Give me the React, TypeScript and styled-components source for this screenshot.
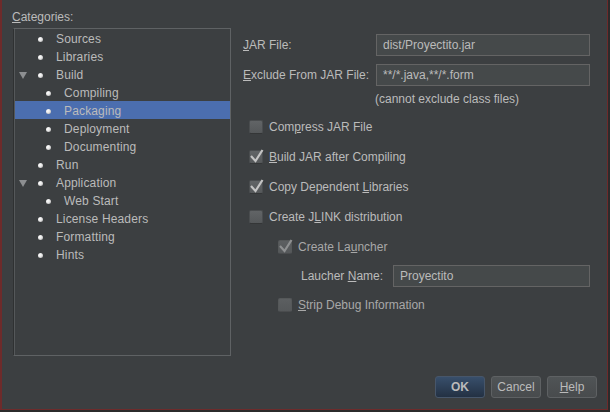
import React from "react";
import styled, { createGlobalStyle } from "styled-components";

const GlobalStyle = createGlobalStyle`
  html, body { margin: 0; padding: 0; background: #2b2b2b; }
  body {
    font-family: "Liberation Sans", Arial, sans-serif;
    font-size: 12px;
    color: #bbbbbb;
  }
`;

const Window = styled.div`
  width: 608px;
  height: 410px;
  box-sizing: border-box;
  background: #3c3f41;
  border-left: 2px solid #6e2b2b;
  border-right: 1px solid #6e2b2b;
  border-bottom: 1px solid #6e2b2b;
  padding: 8px 10px 11px 10px;
  display: flex;
  flex-direction: column;
`;

const Body = styled.div`
  display: flex;
  gap: 12px;
`;

const LeftColumn = styled.div`
  width: 219px;
  display: flex;
  flex-direction: column;
`;

const SectionLabel = styled.div`
  height: 20px;
  line-height: 19px;
`;

const Mn = styled.span`
  text-decoration: underline;
  text-underline-offset: 1px;
`;

const TreeBox = styled.div`
  margin-left: 1px;
  width: 218px;
  height: 328px;
  box-sizing: border-box;
  border: 1px solid #5f6264;
  border-left-color: #2f3132;
  box-shadow: inset 1px 0 0 #55585a;
  display: flex;
  flex-direction: column;
`;

const TreeRow = styled.div<{ $selected?: boolean }>`
  height: 18px;
  box-sizing: border-box;
  padding-top: 2px;
  line-height: 18px;
  display: flex;
  align-items: center;
  background: ${(p) => (p.$selected ? "#4b6eaf" : "transparent")};
  margin-left: ${(p) => (p.$selected ? "1px" : "0")};
  letter-spacing: 0.15px;
`;

const Twisty = styled.div<{ $selected?: boolean }>`
  width: ${(p) => (p.$selected ? "17px" : "18px")};
  display: flex;
  justify-content: center;
  align-items: center;
`;

const Triangle = styled.div`
  width: 0;
  height: 0;
  border-left: 4px solid transparent;
  border-right: 4px solid transparent;
  border-top: 7px solid #8d8f91;
`;

const Bullet = styled.div<{ $depth: number }>`
  width: 5px;
  height: 5px;
  border-radius: 50%;
  margin-left: ${(p) => (p.$depth === 1 ? 6 : 14)}px;
  margin-right: 13px;
  background: radial-gradient(circle at 35% 35%, #ffffff 0%, #e6e6e6 45%, #9a9a9a 100%);
`;

const RightColumn = styled.div`
  flex: 1;
  padding-top: 26px;
  padding-right: 7px;
  display: flex;
  flex-direction: column;
`;

const FieldRow = styled.div<{ $indent?: number; $gapTop?: number; $height?: number }>`
  display: flex;
  align-items: center;
  height: ${(p) => p.$height ?? 22}px;
  margin-top: ${(p) => p.$gapTop ?? 0}px;
  padding-left: ${(p) => p.$indent ?? 0}px;
`;

const FieldLabel = styled.div<{ $width: number }>`
  width: ${(p) => p.$width}px;
  flex-shrink: 0;
  white-space: nowrap;
`;

const TextField = styled.div`
  flex: 1;
  height: 22px;
  line-height: 20px;
  box-sizing: border-box;
  border: 1px solid #646464;
  background: #45494a;
  padding-left: 6px;
  white-space: nowrap;
`;

const Hint = styled.div`
  height: 26px;
  box-sizing: border-box;
  padding-top: 5px;
  padding-left: 132px;
  line-height: 17px;
`;

const CheckRow = styled.div<{ $indent: number; $height?: number }>`
  display: flex;
  align-items: center;
  height: ${(p) => p.$height ?? 30}px;
  padding-left: ${(p) => p.$indent}px;
`;

const Box = styled.div<{ $disabled?: boolean }>`
  position: relative;
  width: 14px;
  height: 14px;
  box-sizing: border-box;
  border-radius: 2px;
  border: 1px solid ${(p) => (p.$disabled ? "#555859" : "#4a4d4f")};
  border-bottom-color: ${(p) => (p.$disabled ? "#4a4c4e" : "#343637")};
  background: ${(p) =>
    p.$disabled
      ? "linear-gradient(#5c5f61, #55585a)"
      : "linear-gradient(#616466, #55585a)"};
  margin-right: 6px;
  flex-shrink: 0;
`;

const CheckMark = styled.svg`
  position: absolute;
  left: -1px;
  top: -1px;
  overflow: visible;
`;

const CheckText = styled.span<{ $disabled?: boolean }>`
  color: ${(p) => (p.$disabled ? "#a8a8a8" : "#bbbbbb")};
  white-space: nowrap;
`;

const ButtonBar = styled.div`
  margin-top: auto;
  display: flex;
  justify-content: flex-end;
  gap: 6px;
`;

const Button = styled.div<{ $primary?: boolean }>`
  width: 50px;
  height: 22px;
  box-sizing: border-box;
  border-radius: 3px;
  border: 1px solid ${(p) => (p.$primary ? "#47566a" : "#5e6163")};
  background: ${(p) =>
    p.$primary
      ? "linear-gradient(#384f6b, #233143)"
      : "linear-gradient(#505456, #484b4d)"};
  display: flex;
  align-items: center;
  justify-content: center;
  font-weight: ${(p) => (p.$primary ? "bold" : "normal")};
  color: #bbbbbb;
`;

type Node = { label: string; depth: number; expanded?: boolean; selected?: boolean };

const nodes: Node[] = [
  { label: "Sources", depth: 1 },
  { label: "Libraries", depth: 1 },
  { label: "Build", depth: 1, expanded: true },
  { label: "Compiling", depth: 2 },
  { label: "Packaging", depth: 2, selected: true },
  { label: "Deployment", depth: 2 },
  { label: "Documenting", depth: 2 },
  { label: "Run", depth: 1 },
  { label: "Application", depth: 1, expanded: true },
  { label: "Web Start", depth: 2 },
  { label: "License Headers", depth: 1 },
  { label: "Formatting", depth: 1 },
  { label: "Hints", depth: 1 },
];

const Check: React.FC<{ checked?: boolean; disabled?: boolean }> = ({ checked, disabled }) => (
  <Box $disabled={disabled}>
    {checked && (
      <CheckMark width="14" height="14" viewBox="0 0 14 14">
        <polyline
          points="2,6 6.5,11 13.5,0"
          fill="none"
          stroke={disabled ? "#8f9192" : "#c4c4c4"}
          strokeWidth="2.2"
          strokeLinejoin="miter"
        />
      </CheckMark>
    )}
  </Box>
);

export default function App() {
  return (
    <>
      <GlobalStyle />
      <Window>
        <Body>
          <LeftColumn>
            <SectionLabel>
              <Mn>C</Mn>ategories:
            </SectionLabel>
            <TreeBox>
              {nodes.map((n) => (
                <TreeRow key={n.label} $selected={n.selected}>
                  <Twisty $selected={n.selected}>{n.expanded && <Triangle />}</Twisty>
                  <Bullet $depth={n.depth} />
                  <span>{n.label}</span>
                </TreeRow>
              ))}
            </TreeBox>
          </LeftColumn>
          <RightColumn>
            <FieldRow>
              <FieldLabel $width={133}>
                <Mn>J</Mn>AR File:
              </FieldLabel>
              <TextField>dist/Proyectito.jar</TextField>
            </FieldRow>
            <FieldRow $gapTop={8}>
              <FieldLabel $width={133}>
                <Mn>E</Mn>xclude From JAR File:
              </FieldLabel>
              <TextField>**/*.java,**/*.form</TextField>
            </FieldRow>
            <Hint>(cannot exclude class files)</Hint>
            <CheckRow $indent={6}>
              <Check />
              <CheckText>
                Com<Mn>p</Mn>ress JAR File
              </CheckText>
            </CheckRow>
            <CheckRow $indent={6}>
              <Check checked />
              <CheckText>
                <Mn>B</Mn>uild JAR after Compiling
              </CheckText>
            </CheckRow>
            <CheckRow $indent={6}>
              <Check checked />
              <CheckText>
                Copy Dependent <Mn>L</Mn>ibraries
              </CheckText>
            </CheckRow>
            <CheckRow $indent={6}>
              <Check />
              <CheckText>
                Create J<Mn>L</Mn>INK distribution
              </CheckText>
            </CheckRow>
            <CheckRow $indent={35}>
              <Check checked disabled />
              <CheckText $disabled>
                Create La<Mn>u</Mn>ncher
              </CheckText>
            </CheckRow>
            <FieldRow $indent={58} $height={28}>
              <FieldLabel $width={92}>
                Laucher <Mn>N</Mn>ame:
              </FieldLabel>
              <TextField>Proyectito</TextField>
            </FieldRow>
            <CheckRow $indent={35}>
              <Check disabled />
              <CheckText $disabled>
                <Mn>S</Mn>trip Debug Information
              </CheckText>
            </CheckRow>
          </RightColumn>
        </Body>
        <ButtonBar>
          <Button $primary>OK</Button>
          <Button>Cancel</Button>
          <Button>
            <span>
              <Mn>H</Mn>elp
            </span>
          </Button>
        </ButtonBar>
      </Window>
    </>
  );
}
